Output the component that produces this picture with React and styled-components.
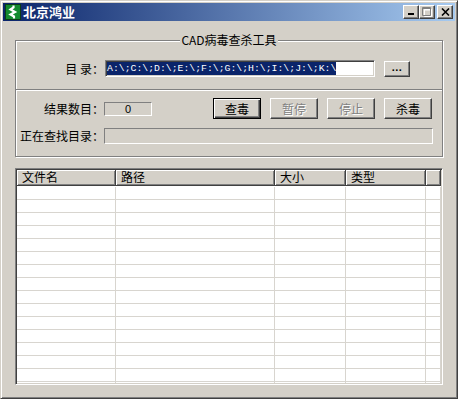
import React from 'react';
import styled, { createGlobalStyle, css } from 'styled-components';

const face = '#d4d0c8';
const shadow = '#808080';
const dark = '#404040';
const cjk = `"Noto Sans CJK SC", "Noto Sans", sans-serif`;

const GlobalStyle = createGlobalStyle`
  html, body {
    margin: 0;
    padding: 0;
    background: ${face};
    overflow: hidden;
  }
  * {
    box-sizing: border-box;
  }
`;

const raised = css`
  border: 1px solid;
  border-color: #fff ${dark} ${dark} #fff;
  box-shadow: inset -1px -1px ${shadow};
`;

const sunken = css`
  border: 1px solid;
  border-color: ${shadow} #fff #fff ${shadow};
`;

const Window = styled.div`
  width: 458px;
  height: 399px;
  display: flex;
  flex-direction: column;
  padding: 2px;
  background: ${face};
  border: 1px solid;
  border-color: ${face} ${dark} ${dark} ${face};
  box-shadow: inset 1px 1px #fff, inset -1px -1px ${shadow};
  font-family: ${cjk};
  font-size: 12px;
  color: #000;
`;

const TitleBar = styled.div`
  height: 18px;
  display: flex;
  align-items: center;
  padding: 0 2px;
  background: linear-gradient(to right, #0a246a, #a6caf0);
`;

const TitleText = styled.span`
  margin-left: 2px;
  flex: 1;
  color: #fff;
  font-weight: 700;
  font-size: 13px;
  line-height: 18px;
`;

const CaptionButton = styled.div`
  width: 16px;
  height: 14px;
  display: flex;
  align-items: center;
  justify-content: center;
  background: ${face};
  ${raised};
  margin-left: ${(p) => p.$gap || 0}px;
`;

const Body = styled.div`
  flex: 1;
  display: flex;
  flex-direction: column;
  padding: 12px 12px 11px;
  min-height: 0;
`;

const Group = styled.fieldset`
  margin: 0;
  padding: 0;
  min-inline-size: 0;
  border: 1px solid ${shadow};
  box-shadow: inset 1px 1px #fff, 1px 1px #fff;
`;

const Legend = styled.legend`
  margin: 0 auto;
  padding: 0 1px;
  line-height: 14px;
  background: ${face};
`;

const Section = styled.div`
  display: flex;
  flex-direction: column;
  gap: 9px;
  padding: ${(p) => p.$pad};
`;

const Separator = styled.div`
  height: 2px;
  border-top: 1px solid ${shadow};
  border-bottom: 1px solid #fff;
`;

const Row = styled.div`
  display: flex;
  align-items: center;
`;

const Label = styled.span`
  width: 88px;
  text-align: right;
  white-space: nowrap;
  line-height: 14px;
`;

const TextField = styled.div`
  width: 270px;
  height: 17px;
  margin-left: 1px;
  background: #fff;
  ${sunken};
  box-shadow: inset 1px 1px ${dark}, inset -1px -1px ${face};
  padding: 1px;
  display: flex;
  align-items: center;
  overflow: hidden;
`;

const Selected = styled.span`
  background: #0a246a;
  color: #fff;
  font-family: "Liberation Mono", monospace;
  font-size: 9.8px;
  line-height: 13px;
  white-space: nowrap;
`;

const StaticBox = styled.div`
  width: ${(p) => p.$w}px;
  height: ${(p) => p.$h}px;
  ${sunken};
  display: flex;
  align-items: center;
  justify-content: center;
  font-family: "Liberation Sans", sans-serif;
  font-size: 11px;
`;

const PushButton = styled.button`
  width: ${(p) => p.$w || 48}px;
  height: ${(p) => p.$h || 21}px;
  margin: 0 0 0 ${(p) => p.$ml || 0}px;
  padding: 0;
  background: ${face};
  font-family: ${cjk};
  font-size: 12px;
  line-height: 14px;
  color: #000;
  ${raised};
  ${(p) =>
    p.$default &&
    css`
      border: 1px solid #000;
      box-shadow: inset 1px 1px #fff, inset -1px -1px ${dark}, inset -2px -2px ${shadow};
    `}
  &:disabled {
    color: ${shadow};
    text-shadow: 1px 1px #fff;
  }
`;

const Dots = styled.span`
  font-family: "Liberation Sans", sans-serif;
  font-weight: 700;
  font-size: 11px;
  letter-spacing: 0.5px;
  position: relative;
  top: -3px;
`;

const ListView = styled.div`
  flex: 1;
  margin-top: 11px;
  display: flex;
  flex-direction: column;
  min-height: 0;
  background: #fff;
  ${sunken};
  box-shadow: inset 1px 1px ${dark}, inset -1px -1px ${face};
  padding: 1px;
  overflow: hidden;
`;

const columns = '99px 159px 71px 80px 1fr';

const HeaderRow = styled.div`
  display: grid;
  grid-template-columns: ${columns};
  height: 16px;
  flex-shrink: 0;
`;

const HeaderCell = styled.div`
  background: ${face};
  border-right: 1px solid ${dark};
  border-bottom: 1px solid ${dark};
  box-shadow: inset 1px 1px #fff, inset -1px -1px ${shadow};
  padding-left: 5px;
  line-height: 14px;
  white-space: nowrap;
`;

const Rows = styled.div`
  flex: 1;
  padding-top: 1px;
  overflow: hidden;
`;

const GridRow = styled.div`
  display: grid;
  grid-template-columns: ${columns};
  height: 13px;
`;

const GridCell = styled.div`
  border-right: 1px solid #d8d5cf;
  border-bottom: 1px solid #d8d5cf;
`;

const AppIcon = () => (
  <svg width="16" height="16" viewBox="0 0 16 16">
    <rect x="0.5" y="0.5" width="15" height="15" fill="#138a2e" stroke="#0b3d16" />
    <polyline
      points="8.5,1.5 8.5,3.5 5.5,5.5 10,8 5.5,10.5 9,12.5 9,14.5"
      fill="none"
      stroke="#fff"
      strokeWidth="2.2"
      strokeLinejoin="miter"
    />
  </svg>
);

const columnNames = ['文件名', '路径', '大小', '类型', ''];

export default function App() {
  return (
    <>
      <GlobalStyle />
      <Window>
        <TitleBar>
          <AppIcon />
          <TitleText>北京鸿业</TitleText>
          <CaptionButton>
            <svg width="8" height="8" viewBox="0 0 8 8">
              <rect x="1" y="5" width="6" height="2" fill="#000" />
            </svg>
          </CaptionButton>
          <CaptionButton>
            <svg width="10" height="10" viewBox="0 0 10 10">
              <path d="M1.5 1.5h7v7h-7z M1 2h8" fill="none" stroke="#fff" transform="translate(1 1)" />
              <path d="M0.5 0.5h8v8h-8z M0 1.5h9" fill="none" stroke={shadow} />
            </svg>
          </CaptionButton>
          <CaptionButton $gap={2}>
            <svg width="9" height="8" viewBox="0 0 9 8">
              <path d="M1 0.5l7 7M8 0.5l-7 7" stroke="#000" strokeWidth="1.6" />
            </svg>
          </CaptionButton>
        </TitleBar>
        <Body>
          <Group>
            <Legend>CAD病毒查杀工具</Legend>
            <Section $pad="13px 0 12px">
              <Row>
                <Label>目 录：</Label>
                <TextField>
                  <Selected>A:\;C:\;D:\;E:\;F:\;G:\;H:\;I:\;J:\;K:\</Selected>
                </TextField>
                <PushButton $w={26} $h={16} $ml={9}>
                  <Dots>...</Dots>
                </PushButton>
              </Row>
            </Section>
            <Separator />
            <Section $pad="7px 0 12px">
              <Row>
                <Label>结果数目：</Label>
                <StaticBox $w={48} $h={14}>0</StaticBox>
                <PushButton $default $ml={61}>查毒</PushButton>
                <PushButton disabled $ml={9}>暂停</PushButton>
                <PushButton disabled $ml={9}>停止</PushButton>
                <PushButton $ml={9}>杀毒</PushButton>
              </Row>
              <Row>
                <Label>正在查找目录：</Label>
                <StaticBox $w={329} $h={16} />
              </Row>
            </Section>
          </Group>
          <ListView>
            <HeaderRow>
              {columnNames.map((name, i) => (
                <HeaderCell key={i}>{name}</HeaderCell>
              ))}
            </HeaderRow>
            <Rows>
              {Array.from({ length: 16 }).map((_, r) => (
                <GridRow key={r}>
                  {columnNames.map((_, c) => (
                    <GridCell key={c} />
                  ))}
                </GridRow>
              ))}
            </Rows>
          </ListView>
        </Body>
      </Window>
    </>
  );
}
